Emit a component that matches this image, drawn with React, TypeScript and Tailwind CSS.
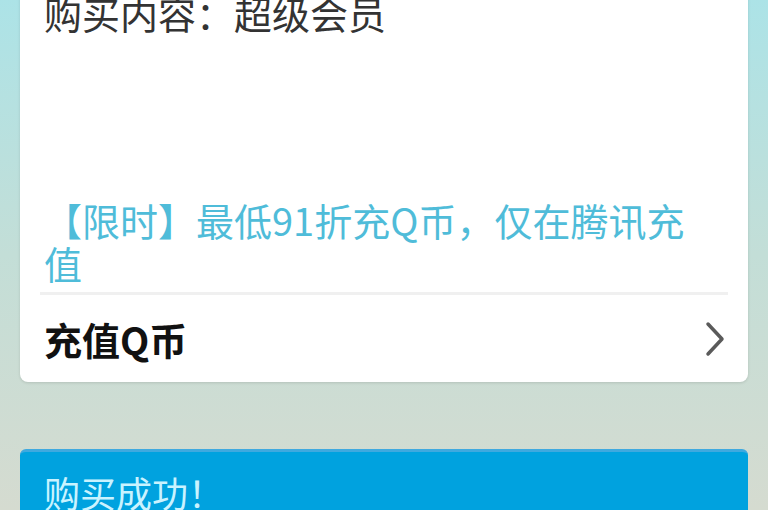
const font = { fontFamily: '"Noto Sans CJK SC", "Noto Sans", sans-serif' };

export default function App() {
  return (
    <div
      className="w-[768px] h-[510px] overflow-hidden bg-gradient-to-b from-[#ace3e7] via-[#c3ded7] to-[#d5dbd0] px-[20px]"
      style={font}
    >
      {/* order detail card */}
      <div className="bg-white rounded-b-[8px] shadow-[0_1px_3px_rgba(0,0,0,0.12)]">
        <div className="px-[24px] mt-[-6px] text-[38px] leading-[38px] text-[#333]">
          购买内容：超级会员
        </div>
        <div className="pl-[24px] pr-[40px] pt-[166px] text-[38px] leading-[43px] text-[#4fbcd9]">
          【限时】最低91折充Q币，仅在腾讯充值
        </div>
        <div className="mx-[20px] mt-[8px] h-[3px] bg-[#f0f0f0]" />
        <div className="flex items-center justify-between pl-[24px] pr-[22px] h-[87px]">
          <span className="text-[38px] font-bold text-[#111]">充值Q币</span>
          <svg width="22" height="36" viewBox="0 0 22 36" fill="none">
            <polyline
              points="4,3 18,18 4,33"
              stroke="#5a5a5a"
              strokeWidth="3.5"
              strokeLinecap="round"
              strokeLinejoin="round"
            />
          </svg>
        </div>
      </div>

      {/* success banner */}
      <div className="mt-[67px] h-[80px] bg-[#00a2df] border-t-[3px] border-[#3fa9df] rounded-t-[6px] px-[24px] pt-[22px]">
        <span className="text-[36px] leading-[36px] text-[#c9f3ff]">购买成功！</span>
      </div>
    </div>
  );
}
